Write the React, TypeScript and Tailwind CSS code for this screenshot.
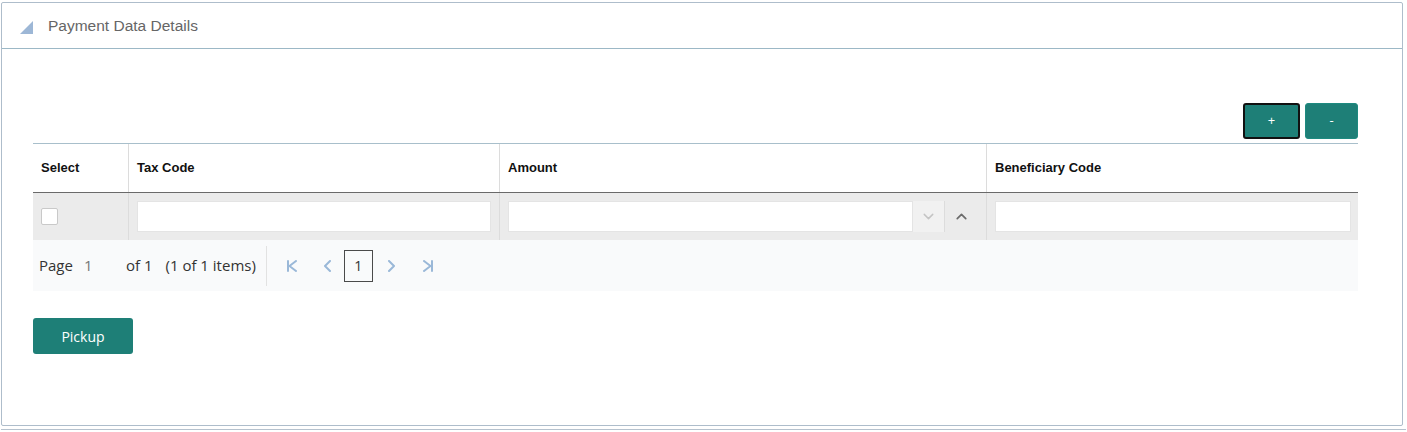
import { ChevronDown, ChevronUp } from 'lucide-react';

const columns = [
    { label: 'Select', width: 'w-[95px]' },
    { label: 'Tax Code', width: 'w-[371px]' },
    { label: 'Amount', width: 'w-[487px]' },
    { label: 'Beneficiary Code', width: 'flex-1' },
];

const PagerIcon = ({ d, w }: { d: string; w: number }) => (
    <svg width={w} height="12" viewBox={`0 0 ${w} 12`} fill="none" stroke="#9ab8d8" strokeWidth="2" strokeLinecap="round" strokeLinejoin="round">
        <path d={d} />
    </svg>
);

export default function App() {
    return (
        <div className="w-[1407px] h-[432px] bg-white font-['Liberation_Sans',Arial,sans-serif] pt-[2px] pl-px">
            {/* Panel */}
            <div className="w-[1402px] h-[424px] border border-[#aebdcb] rounded-[2px]">
                {/* Header */}
                <div className="h-[46px] border-b border-[#9cb8c6] flex items-center pl-[18px]">
                    <svg width="13" height="13" viewBox="0 0 13 13" className="mt-[4px]">
                        <polygon points="13,0 13,13 0,13" fill="#9db7d6" />
                    </svg>
                    <span className="ml-[15px] text-[15.5px] text-[#666] leading-none">Payment Data Details</span>
                </div>

                {/* Body */}
                <div className="pt-[54px] pl-[31px] pr-[44px]">
                    <div className="flex justify-end gap-[5px]">
                        <button className="w-[57px] h-[36px] rounded-[3px] bg-[#1e7f77] border-2 border-[#111] text-white text-[13px] font-['Open_Sans',sans-serif]">
                            +
                        </button>
                        <button className="w-[53px] h-[36px] rounded-[3px] bg-[#1e7f77] border border-[#1e8a80] text-white text-[13px] font-['Open_Sans',sans-serif]">
                            -
                        </button>
                    </div>

                    {/* Grid */}
                    <div className="mt-[4px] border-t border-[#a8bfcb]">
                        <div className="flex h-[49px] border-b border-[#6a6a6a]">
                            {columns.map((c, i) => (
                                <div
                                    key={c.label}
                                    className={`${c.width} flex items-center pl-[8px] text-[13px] font-bold text-[#111] ${i > 0 ? 'border-l border-[#dcdcdc]' : ''}`}
                                >
                                    {c.label}
                                </div>
                            ))}
                        </div>
                        <div className="flex h-[47px] bg-[#ebebeb]">
                            <div className="w-[95px] flex items-center pl-[8px]">
                                <div className="w-[17px] h-[17px] bg-white border border-[#c9c9c9] rounded-[2px]" />
                            </div>
                            <div className="w-[371px] border-l border-[#dcdcdc] flex items-center px-[8px]">
                                <div className="w-full h-[31px] bg-white border border-[#e4e4e4]" />
                            </div>
                            <div className="w-[487px] border-l border-[#dcdcdc] flex items-center pl-[8px] pr-[8px]">
                                <div className="flex-1 h-[31px] bg-white border border-[#e4e4e4]" />
                                <div className="w-[32px] h-[31px] bg-[#f1f1f1] border-r border-[#dcdcdc] flex items-center justify-center">
                                    <ChevronDown size={17} strokeWidth={2} className="text-[#c4c4c4]" />
                                </div>
                                <div className="w-[33px] h-[31px] flex items-center justify-center">
                                    <ChevronUp size={17} strokeWidth={2.4} className="text-[#6b6b6b]" />
                                </div>
                            </div>
                            <div className="flex-1 border-l border-[#dcdcdc] flex items-center pl-[8px] pr-[7px]">
                                <div className="w-full h-[31px] bg-white border border-[#e4e4e4]" />
                            </div>
                        </div>

                        {/* Pager */}
                        <div className="h-[51px] bg-[#f9fafb] flex items-center font-['Open_Sans',sans-serif] text-[15px] text-[#333]">
                            <span className="ml-[6px]">Page</span>
                            <span className="ml-[11px] w-[42px] text-[#777]">1</span>
                            <span>of 1</span>
                            <span className="ml-[13px]">(1 of 1 items)</span>
                            <div className="ml-[10px] w-px h-[40px] bg-[#e2e2e2]" />
                            <div className="ml-[19px]">
                                <PagerIcon w={12} d="M2 1v10M10 1 3.5 6 10 11" />
                            </div>
                            <div className="ml-[25px]">
                                <PagerIcon w={9} d="M7 1 2 6l5 5" />
                            </div>
                            <div className="ml-[12px] w-[29px] h-[32px] border border-[#4a4a4a] flex items-center justify-center text-[14px] text-[#333]">
                                1
                            </div>
                            <div className="ml-[14px]">
                                <PagerIcon w={9} d="M2 1l5 5-5 5" />
                            </div>
                            <div className="ml-[26px]">
                                <PagerIcon w={12} d="M10 1v10M2 1 8.5 6 2 11" />
                            </div>
                        </div>
                    </div>

                    <button className="mt-[27px] w-[100px] h-[36px] rounded-[3px] bg-[#1e7f77] text-white text-[14px] font-['Open_Sans',sans-serif]">
                        Pickup
                    </button>
                </div>
            </div>
            <div className="mt-[3px] h-px w-[1405px] bg-[#b6c2ce]" />
        </div>
    );
}
